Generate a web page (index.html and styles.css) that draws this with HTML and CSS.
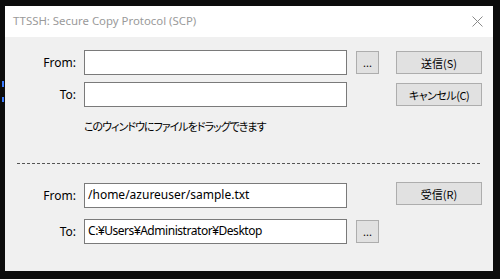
FILE: index.html
```html
<!DOCTYPE html>
<html lang="ja">
<head>
<meta charset="utf-8">
<title>TTSSH: Secure Copy Protocol (SCP)</title>
<link rel="stylesheet" href="styles.css">
</head>
<body>
<div class="desktop">
  <span class="peek peek-a"></span>
  <span class="peek peek-b"></span>
  <div class="window">
    <div class="titlebar">
      <span class="title">TTSSH: Secure Copy Protocol (SCP)</span>
      <svg class="close" width="11" height="11" viewBox="0 0 11 11"><path d="M0.5 0.5L10.5 10.5M10.5 0.5L0.5 10.5" stroke="#8a8a8a" stroke-width="1" fill="none"/></svg>
    </div>
    <div class="content">
      <div class="row">
        <label class="lbl">From:</label>
        <div class="field"></div>
        <button class="browse">...</button>
        <button class="action">送信(S)</button>
      </div>
      <div class="row row-gap">
        <label class="lbl">To:</label>
        <div class="field"></div>
        <button class="action action-solo action-tight">キャンセル(C)</button>
      </div>
      <div class="hint">このウィンドウにファイルをドラッグできます</div>
      <div class="separator"></div>
      <div class="row row-top">
        <label class="lbl">From:</label>
        <div class="field">/home/azureuser/sample.txt</div>
        <button class="action action-solo action-up">受信(R)</button>
      </div>
      <div class="row row-gap2">
        <label class="lbl">To:</label>
        <div class="field field-path">C:<span class="yen">¥</span>Users<span class="yen">¥</span>Administrator<span class="yen">¥</span>Desktop</div>
        <button class="browse">...</button>
      </div>
    </div>
  </div>
</div>
</body>
</html>
```

FILE: styles.css
```css
html, body {
  margin: 0;
  padding: 0;
  background: #0c0c0c;
}
.desktop {
  position: relative;
  width: 500px;
  height: 279px;
  padding: 6px 0 0 5px;
  box-sizing: border-box;
  font-family: "Noto Sans", "Noto Sans CJK JP", sans-serif;
  font-size: 12px;
  color: #000;
}
.peek {
  position: absolute;
  left: 2px;
  width: 2px;
  background: #3a7bff;
}
.peek-a { top: 81px; height: 6px; }
.peek-b { top: 97px; height: 5px; }
.window {
  width: 488px;
  height: 265px;
  background: #f0f0f0;
  display: flex;
  flex-direction: column;
}
.titlebar {
  height: 31px;
  background: #fff;
  display: flex;
  align-items: center;
  padding-left: 8px;
  padding-right: 10px;
}
.title {
  flex: 1;
  color: #9a9a9a;
  font-size: 11.4px;
  padding-bottom: 2px;
}
.close {
  display: block;
  margin-bottom: 1px;
}
.content {
  padding-top: 13px;
  display: flex;
  flex-direction: column;
}
.row {
  display: flex;
  align-items: center;
  height: 25px;
}
.row-gap { margin-top: 7px; }
.row-top { margin-top: 19px; align-items: flex-start; }
.row-gap2 { margin-top: 11px; }
.lbl {
  width: 71px;
  text-align: right;
  flex: none;
  line-height: 16px;
}
.row-top .lbl { margin-top: 5px; }
.field {
  width: 263px;
  height: 25px;
  box-sizing: border-box;
  margin-left: 8px;
  border: 1px solid #7a7a7a;
  background: #fff;
  padding: 0 3px;
  line-height: 22px;
  white-space: nowrap;
  overflow: hidden;
}
.field-path {
  letter-spacing: -0.45px;
}
.yen {
  font-family: "Liberation Sans", sans-serif;
}
button {
  font-family: inherit;
  font-size: 12px;
  color: #000;
  background: #e1e1e1;
  border: 1px solid #adadad;
  height: 23px;
  padding: 0;
  box-sizing: border-box;
}
.browse {
  width: 23px;
  margin-left: 9px;
  font-size: 11px;
  line-height: 18px;
  font-family: "Noto Sans", sans-serif;
}
.action {
  width: 86px;
  margin-left: 17px;
  font-family: "Noto Sans CJK JP", sans-serif;
  font-size: 11px;
  font-feature-settings: "palt";
}
.action-tight { letter-spacing: -0.5px; }
.action-solo { margin-left: 49px; }
.action-up { margin-top: -1px; }
.hint {
  margin-left: 79px;
  margin-top: 11px;
  height: 16px;
  line-height: 16px;
  font-family: "Noto Sans CJK JP", sans-serif;
  font-size: 11px;
  letter-spacing: -1px;
  font-feature-settings: "palt";
}
.separator {
  margin-left: 12px;
  width: 465px;
  height: 1px;
  margin-top: 29px;
  background: repeating-linear-gradient(to right, #555 0 3px, transparent 3px 5px);
}
```
